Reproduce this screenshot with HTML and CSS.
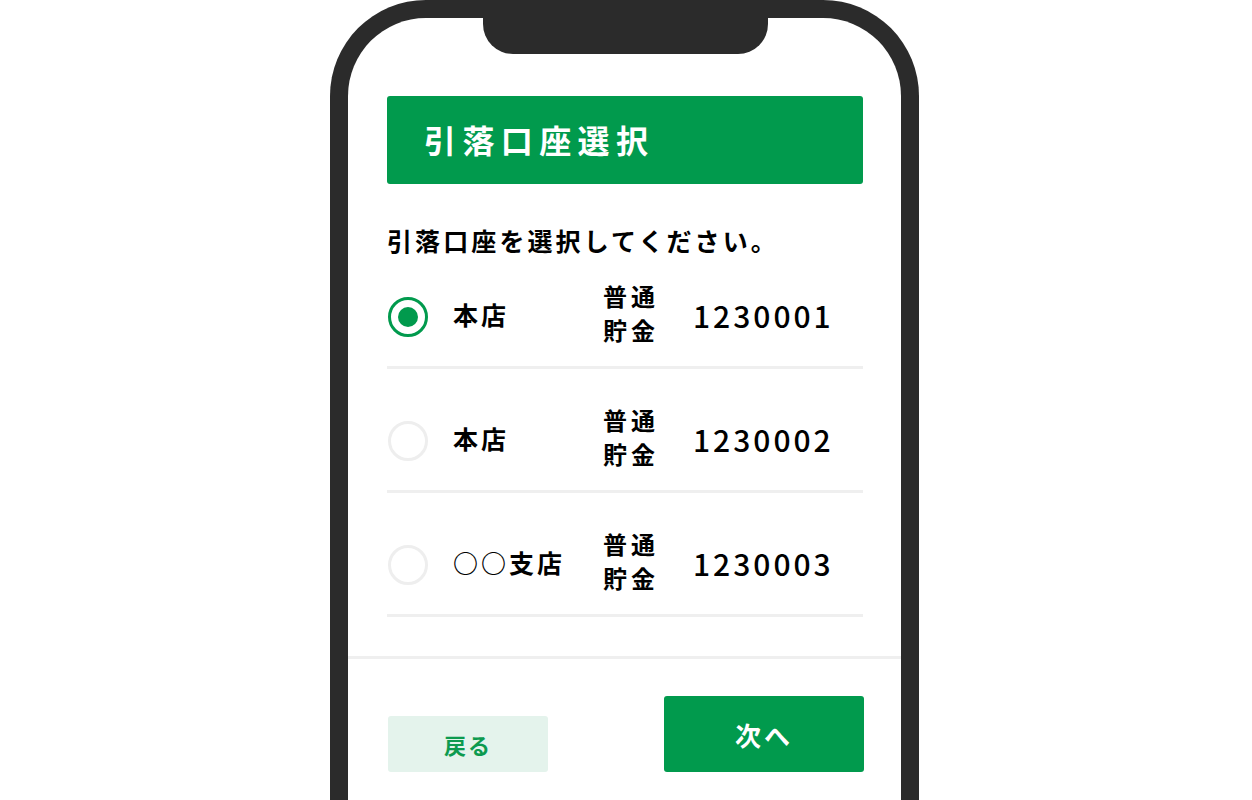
FILE: index.html
```html
<!DOCTYPE html>
<html lang="ja">
<head>
<meta charset="utf-8">
<title>引落口座選択</title>
<link rel="stylesheet" href="styles.css">
</head>
<body>
<div class="phone">
  <div class="notch"></div>
  <div class="screen">
    <div class="main">
      <h1 class="title">引落口座選択</h1>
      <p class="lead">引落口座を選択してください。</p>
      <ul class="list">
        <li class="row">
          <span class="radio checked"></span>
          <span class="branch">本店</span>
          <span class="type">普通<br>貯金</span>
          <span class="num">1230001</span>
        </li>
        <li class="row">
          <span class="radio"></span>
          <span class="branch">本店</span>
          <span class="type">普通<br>貯金</span>
          <span class="num">1230002</span>
        </li>
        <li class="row">
          <span class="radio"></span>
          <span class="branch">○○支店</span>
          <span class="type">普通<br>貯金</span>
          <span class="num">1230003</span>
        </li>
      </ul>
    </div>
    <div class="footer">
      <button class="btn back">戻る</button>
      <button class="btn next">次へ</button>
    </div>
  </div>
</div>
</body>
</html>
```

FILE: styles.css
```css
html, body {
  margin: 0;
  padding: 0;
  background: #ffffff;
}
body {
  width: 1252px;
  height: 800px;
  overflow: hidden;
  font-family: "Noto Sans CJK JP", "Noto Sans", sans-serif;
  color: #000;
}
.phone {
  position: relative;
  box-sizing: border-box;
  width: 589px;
  height: 900px;
  margin-left: 330px;
  border: 18px solid #2b2b2b;
  border-bottom: none;
  border-radius: 96px 96px 0 0;
  background: #fff;
}
.notch {
  position: absolute;
  top: 0;
  left: 135px;
  width: 285px;
  height: 36px;
  background: #2b2b2b;
  border-radius: 0 0 30px 30px;
}
.main {
  padding: 78px 38px 0 39px;
}
.title {
  margin: 0;
  height: 88px;
  line-height: 86px;
  padding-left: 37px;
  background: #019a4d;
  border-radius: 3px;
  color: #fff;
  font-size: 32px;
  font-weight: 700;
  letter-spacing: 6.4px;
}
.lead {
  margin: 38px 0 0;
  font-size: 25px;
  line-height: 36px;
  font-weight: 700;
  letter-spacing: 3.1px;
}
.list {
  list-style: none;
  margin: 0 0 39px;
  padding: 0;
}
.row {
  display: flex;
  align-items: center;
  height: 68px;
  padding: 38px 0 15px 1px;
  border-bottom: 3px solid #efefef;
}
.row:first-child {
  padding-top: 25px;
}
.radio {
  box-sizing: border-box;
  width: 40px;
  height: 40px;
  border-radius: 50%;
  border: 3.5px solid #eeeeee;
  margin-right: 25px;
  display: flex;
  align-items: center;
  justify-content: center;
  flex: none;
}
.radio.checked {
  border-color: #019a4d;
}
.radio.checked::after {
  content: "";
  width: 20px;
  height: 20px;
  border-radius: 50%;
  background: #019a4d;
}
.branch {
  width: 150px;
  font-size: 25px;
  font-weight: 700;
  letter-spacing: 3px;
  line-height: 36px;
  padding-bottom: 6px;
}
.type {
  width: 90px;
  font-size: 24px;
  font-weight: 700;
  letter-spacing: 4px;
  line-height: 34px;
  padding-bottom: 8px;
}
.num {
  font-size: 30px;
  font-weight: 500;
  letter-spacing: 3px;
  line-height: 44px;
  padding-bottom: 4px;
}
.footer {
  border-top: 3px solid #efefef;
  padding: 37px 37px 0 40px;
  display: flex;
  justify-content: space-between;
  align-items: flex-end;
}
.btn {
  border: none;
  border-radius: 3px;
  font-family: "Noto Sans CJK JP", "Noto Sans", sans-serif;
  font-weight: 700;
  padding: 0;
  cursor: pointer;
}
.back {
  width: 160px;
  height: 56px;
  background: #e4f3ec;
  color: #0d9a4f;
  font-size: 22px;
  letter-spacing: 2px;
}
.next {
  width: 200px;
  height: 76px;
  background: #019a4d;
  color: #fff;
  font-size: 26px;
  letter-spacing: 3px;
}
```
